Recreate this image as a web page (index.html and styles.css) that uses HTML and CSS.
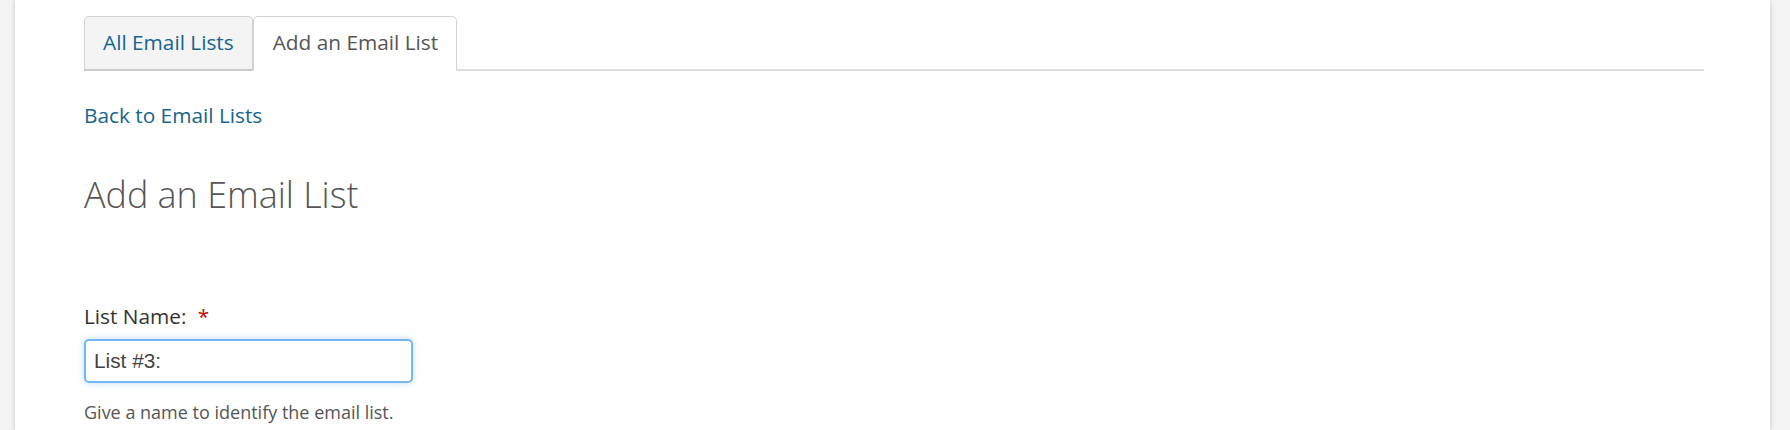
FILE: index.html
```html
<!DOCTYPE html>
<html lang="en">
<head>
<meta charset="utf-8">
<title>Add an Email List</title>
<link rel="stylesheet" href="styles.css">
</head>
<body>
<div class="page">
  <ul class="tabs">
    <li class="tab"><a href="#" class="tab-link">All Email Lists</a></li>
    <li class="tab tab-active"><a href="#" class="tab-link">Add an Email List</a></li>
  </ul>
  <a href="#" class="back-link">Back to Email Lists</a>
  <h1 class="title">Add an Email List</h1>
  <form class="form">
    <label class="label" for="list-name">List Name: <span class="required">*</span></label>
    <input class="input" id="list-name" type="text" value="List #3:">
    <p class="help">Give a name to identify the email list.</p>
  </form>
</div>
</body>
</html>
```
FILE: styles.css
```css
html, body {
  margin: 0;
  padding: 0;
}
body {
  background: #f3f3f3;
  font-family: "Open Sans", "Liberation Sans", sans-serif;
  height: 430px;
  overflow: hidden;
}
.page {
  margin: 0 20px 0 15px;
  background: #ffffff;
  height: 430px;
  box-shadow: 0 0 5px rgba(0, 0, 0, 0.18);
  padding: 16px 66px 0 69px;
  box-sizing: border-box;
}
.tabs {
  display: flex;
  list-style: none;
  margin: 0;
  padding: 0;
  border-bottom: 2px solid #dddddd;
}
.tab {
  margin-bottom: -2px;
}
.tab-link {
  display: block;
  font-size: 20.8px;
  line-height: 28px;
  padding: 11px 18px 13px;
  border: 1px solid #d2d2d2;
  border-bottom: 2px solid #cccccc;
  border-radius: 5px 5px 0 0;
  background: #f4f4f4;
  color: #15658c;
  text-decoration: none;
}
.tab-active .tab-link {
  background: #ffffff;
  color: #555555;
  padding-left: 19px;
  border-color: #d2d2d2;
  border-bottom-color: #ffffff;
}
.back-link {
  display: block;
  margin-top: 30px;
  font-size: 20.8px;
  line-height: 28px;
  color: #15658c;
  text-decoration: none;
  width: max-content;
}
.title {
  margin: 46px 0 0;
  font-size: 35.9px;
  line-height: 40px;
  font-weight: 300;
  color: #555555;
}
.form {
  margin-top: 87px;
}
.label {
  display: block;
  font-size: 20.8px;
  line-height: 28px;
  color: #333333;
}
.required {
  color: #cc0000;
  margin-left: 6px;
}
.input {
  display: block;
  margin-top: 9px;
  width: 329px;
  height: 44px;
  box-sizing: border-box;
  border: 2px solid #76b6ee;
  border-radius: 5px;
  padding: 0 8px;
  font-family: "Liberation Sans", Arial, sans-serif;
  font-size: 20.8px;
  color: #444444;
  outline: none;
  box-shadow: 0 0 6px rgba(102, 175, 233, 0.45);
}
.help {
  margin: 17px 0 0;
  font-size: 18px;
  line-height: 24px;
  color: #555555;
}
```
